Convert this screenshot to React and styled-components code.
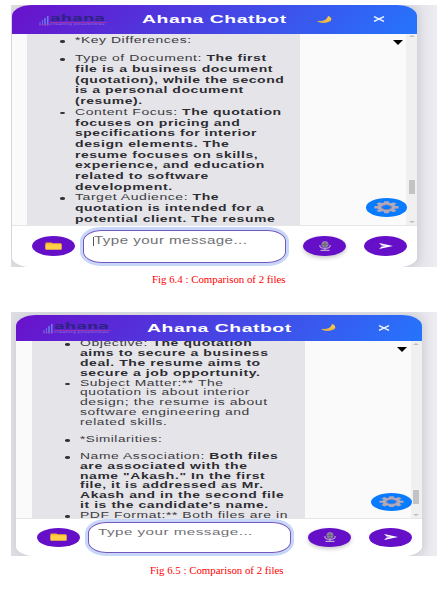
import React, { useLayoutEffect, useRef, useState } from "react";
import styled, { createGlobalStyle } from "styled-components";

const GlobalStyle = createGlobalStyle`
  * { box-sizing: border-box; }
  body { margin: 0; background: #fff; overflow: hidden; }
`;

const Page = styled.main`
  width: 437px;
  height: 593px;
  overflow: hidden;
  display: flex;
  flex-direction: column;
  padding: 5px 0 0 11px;
`;

const Backdrop = styled.section`
  height: ${(p) => p.$height}px;
  flex: none;
  overflow: hidden;
  padding: ${(p) => p.$pad};
  background: linear-gradient(90deg, #dddde3 0, #e2e2e8 405px, #e9e8ee 418px, #eeedf2 426px);
`;

const Card = styled.div`
  width: 405.5px;
  height: 100%;
  display: flex;
  flex-direction: column;
  overflow: hidden;
  background: #fff;
  border-radius: 20px 20px 19px 19px / 11px 11px 10px 10px;
  box-shadow: 2px 0 8px rgba(70, 70, 90, 0.14);
`;

const Header = styled.header`
  flex: none;
  height: ${(p) => p.$height}px;
  display: flex;
  align-items: center;
  padding-left: 27px;
  background: linear-gradient(135deg, #6a11cb 0%, #2575fc 100%);
`;

const Brand = styled.div`
  width: 69px;
  height: 13px;
  display: flex;
  align-items: flex-end;
  margin-right: 34.5px;
`;

const BrandText = styled.div`
  display: flex;
  flex-direction: column;
  width: 57px;
  height: 12px;
`;

const BrandName = styled.div`
  height: 8px;
  display: flex;
  align-items: center;
  color: #2f2384;
  font: bold 9px/8px "DejaVu Sans", sans-serif;
`;

const BrandTag = styled.div`
  height: 4px;
  border-top: 1px solid #9a2fae;
  color: #8f74dc;
  font: 3px/3px "DejaVu Sans", sans-serif;
`;

const Title = styled.div`
  width: 146px;
  color: #fff;
  font: bold 11px/14px "Liberation Sans", sans-serif;
  letter-spacing: 0.3px;
  margin-right: 28.5px;
`;

const HeaderIcon = styled.span`
  display: flex;
  width: ${(p) => p.$width}px;
  margin-right: ${(p) => p.$gap || 0}px;
`;

const Body = styled.div`
  flex: 1;
  min-height: 0;
  display: flex;
  padding-left: 15.5px;
  background: #fafafa;
`;

const Bubble = styled.ul`
  width: 273px;
  margin: 0;
  padding: ${(p) => p.$top}px 0 0 48px;
  overflow: hidden;
  list-style: none;
  background: #e5e4e9;
  color: #3a3a40;
  font: ${(p) => p.$size}px/${(p) => p.$pitch}px "Liberation Sans", sans-serif;
  letter-spacing: 0.35px;
  b { color: #2c2c31; }
`;

const Item = styled.li`
  position: relative;
  margin-bottom: ${(p) => p.$gap || 0}px;
  &::before {
    content: "";
    position: absolute;
    left: -15px;
    top: ${(p) => p.$dot}px;
    width: 5px;
    height: 2.6px;
    border-radius: 50%;
    background: #303035;
  }
`;

const FitBox = styled.div`
  width: ${(p) => p.$width}px;
  white-space: pre;
`;

const FitText = styled.span`
  display: inline-block;
  transform-origin: 0 50%;
  vertical-align: top;
`;

const Side = styled.div`
  flex: 1;
  display: flex;
  flex-direction: column;
  justify-content: space-between;
  align-items: flex-end;
  padding: ${(p) => p.$pad};
`;

const Arrow = styled.i`
  border: solid transparent;
  border-width: ${(p) => (p.$up ? "0 3.5px 2.5px" : "2.5px 3.5px 0")};
  border-${(p) => (p.$up ? "bottom" : "top")}-color: #bcbcbc;
`;

const Chevron = styled.i`
  margin-right: 3.5px;
  border: solid transparent;
  border-width: 5.5px 5.5px 0;
  border-top-color: #000;
`;

const Gear = styled.div`
  width: 41px;
  height: ${(p) => p.$height}px;
  border-radius: 50%;
  background: #087bff;
  display: flex;
  align-items: center;
  justify-content: center;
  margin-right: -1px;
  z-index: 1;
`;

const Scrollbar = styled.div`
  width: 11px;
  display: flex;
  flex-direction: column;
  align-items: center;
  padding: 1.5px 0;
  background: #f0f0f0;
`;

const Thumb = styled.div`
  width: 6px;
  height: 14px;
  margin: auto 0 ${(p) => p.$bottom}px;
  background: #c3c3c3;
`;

const Footer = styled.footer`
  flex: none;
  height: ${(p) => p.$height}px;
  display: flex;
  align-items: center;
  padding: 0 0 0 20.5px;
  border-top: 1px solid #e6e6e9;
  background: #fff;
`;

const RoundButton = styled.div`
  width: 43px;
  height: ${(p) => p.$height}px;
  flex: none;
  display: flex;
  align-items: center;
  justify-content: center;
  margin-right: ${(p) => p.$gap || 0}px;
  border-radius: 50%;
  background: #6510c8;
  box-shadow: ${(p) => (p.$shadow ? "0 2px 4px rgba(0,0,0,0.22)" : "none")};
`;

const Input = styled.div`
  width: 203px;
  height: ${(p) => p.$height}px;
  flex: none;
  display: flex;
  padding: ${(p) => p.$top}px 0 0 9px;
  margin-right: 17px;
  border: 1px solid #7457bd;
  border-radius: 19px / 11px;
  box-shadow: 0 0 0 3px #c6d7f9;
  color: #707074;
  font: ${(p) => p.$size}px/12px "Liberation Sans", sans-serif;
  letter-spacing: 0.3px;
`;

const Caret = styled.i`
  width: 1px;
  height: 9px;
  margin-top: 2px;
  background: #555;
`;

const Caption = styled.p`
  margin: ${(p) => p.$margin};
  color: #ff0000;
  font: 10.7px/13px "Liberation Serif", serif;
`;

/* Stretches a single line horizontally until it fills the given width. */
function Fit({ width, children }) {
  const ref = useRef(null);
  const [scale, setScale] = useState(1);
  useLayoutEffect(() => {
    setScale(width / ref.current.offsetWidth);
  }, [width]);
  return (
    <FitBox $width={width}>
      <FitText ref={ref} style={{ transform: `scaleX(${scale})` }}>
        {children}
      </FitText>
    </FitBox>
  );
}

const MoonIcon = () => (
  <svg width="15" height="7" viewBox="0 0 15 7">
    <path d="M11 0C14.5 1 15.5 4 12.5 5.6C9 7.4 3 7.2 0 4.9C5 5.7 10 4.4 11 0Z" fill="#f6c544" />
    <path d="M1 5.1C5 6.2 10 6 13.5 4" fill="none" stroke="#d99b3c" strokeWidth=".5" />
  </svg>
);

const CloseIcon = () => (
  <svg width="12" height="6" viewBox="0 0 12 6">
    <path d="M1 .6L11 5.4M11 .6L1 5.4" stroke="#e8f0ff" strokeWidth="1.5" />
  </svg>
);

const BarsIcon = () => (
  <svg width="11" height="11" viewBox="0 0 11 11">
    <path d="M1 10.5V7M3.5 10.5V5" stroke="#6a62e8" strokeWidth="1.2" />
    <path d="M6 10.5V3M8.8 10.5V1" stroke="#6e8cec" strokeWidth="1.3" />
    <path d="M0 9.5H11" stroke="#a83bb0" strokeWidth=".6" />
  </svg>
);

const FolderIcon = () => (
  <svg width="17" height="8" viewBox="0 0 17 8">
    <path d="M.5 7V1Q.5.5 1.5.5H6L8 1.3H15.5Q16.5 1.3 16.5 2V7Q16.5 7.5 15.5 7.5H1.5Q.5 7.5.5 7Z" fill="#f5b52e" />
    <path d="M.5 2.2H16.5V7Q16.5 7.5 15.5 7.5H1.5Q.5 7.5.5 7Z" fill="#ffcf45" />
  </svg>
);

const MicIcon = () => (
  <svg width="12" height="10" viewBox="0 0 12 10">
    <path d="M.9 4V5C.9 8.2 11.1 8.2 11.1 5V4M6 7.3V9M1.5 9.3H10.5" fill="none" stroke="#b9a9cf" strokeWidth="1.2" />
    <rect x="2.6" y=".3" width="6.8" height="6.2" rx="3" fill="#a7a0ae" />
    <path d="M3 2H9M2.8 3.6H9.2M3 5.1H9" stroke="#5a4d6b" strokeWidth=".7" />
    <path d="M6 .5V6.3" stroke="#5a4d6b" strokeWidth=".5" />
  </svg>
);

const SendIcon = () => (
  <svg width="14" height="6" viewBox="0 0 14 6">
    <path d="M0 0L14 3L0 6L2.6 3.5L7 3L2.6 2.5Z" fill="#fff" />
  </svg>
);

const GearIcon = ({ height }) => (
  <svg width="25" height={height} viewBox="-12 -12 24 24" preserveAspectRatio="none">
    <path
      d={[0, 45, 90, 135]
        .map((a) => {
          const r = (a * Math.PI) / 180;
          const x = 11.6 * Math.cos(r);
          const y = 11.6 * Math.sin(r);
          return `M${x} ${y}L${x * 0.65} ${y * 0.65}M${-x} ${-y}L${-x * 0.65} ${-y * 0.65}`;
        })
        .join("")}
      stroke="#b3a8b8"
      strokeWidth="4.6"
    />
    <circle r="6.6" fill="#087bff" stroke="#b3a8b8" strokeWidth="4.6" />
    <circle r="4.8" fill="none" stroke="#7580b4" strokeWidth="1" />
  </svg>
);

const first = {
  height: 261.5, pad: "0 0 0 0.5px", header: 28.5, footer: 42,
  size: 8.9, pitch: 10.7, top: 1.8, dot: 4.8, caret: true,
  button: 20, buttonGap: 8, gear: 19, input: 33, inputTop: 4.5, inputSize: 10, placeholder: 154,
  side: "6px 0 7.5px", thumb: 27,
  items: [
    { gap: 7.3, lines: [[116, "*Key Differences:"]] },
    { lines: [
      [191, "Type of Document: ", "The first"],
      [197.5, "", "file is a business document"],
      [209.5, "", "(quotation), while the second"],
      [169, "", "is a personal document"],
      [67.5, "", "(resume)."],
    ] },
    { lines: [
      [206.5, "Content Focus: ", "The quotation"],
      [165.5, "", "focuses on pricing and"],
      [182, "", "specifications for interior"],
      [154, "", "design elements. The"],
      [183.5, "", "resume focuses on skills,"],
      [189.5, "", "experience, and education"],
      [134.5, "", "related to software"],
      [97, "", "development."],
    ] },
    { lines: [
      [143.5, "Target Audience: ", "The"],
      [189.5, "", "quotation is intended for a"],
      [200, "", "potential client. The resume"],
    ] },
  ],
};

const second = {
  height: 244, pad: "2.5px 0 0 5px", header: 26.5, footer: 38.5,
  size: 8.3, pitch: 9.87, top: 0, shift: -1.9, dot: 4.2,
  button: 19, buttonGap: 8.5, gear: 18, input: 31, inputTop: 3.5, inputSize: 9.3, placeholder: 155,
  side: "6px 0 7px", thumb: 10,
  items: [
    { lines: [
      [171.5, "Objective: ", "The quotation"],
      [188.5, "", "aims to secure a business"],
      [181.5, "", "deal. The resume aims to"],
      [180, "", "secure a job opportunity."],
    ] },
    { gap: 7, lines: [
      [143.5, "Subject Matter:** The"],
      [170.5, "quotation is about interior"],
      [187, "design; the resume is about"],
      [170.5, "software engineering and"],
      [87, "related skills."],
    ] },
    { gap: 7, lines: [[83, "*Similarities:"]] },
    { lines: [
      [199, "Name Association: ", "Both files"],
      [167, "", "are associated with the"],
      [186, "", 'name "Akash." In the first'],
      [183, "", "file, it is addressed as Mr."],
      [204.5, "", "Akash and in the second file"],
      [188, "", "it is the candidate's name."],
    ] },
    { lines: [[207.5, "PDF Format:** Both files are in"]] },
  ],
};

const Messages = styled.div`
  margin-top: ${(p) => p.$shift || 0}px;
`;

function Chat({ d }) {
  return (
    <Backdrop $height={d.height} $pad={d.pad}>
      <Card>
        <Header $height={d.header}>
          <Brand>
            <BarsIcon />
            <BrandText>
              <BrandName><Fit width={55}>ahana</Fit></BrandName>
              <BrandTag><Fit width={55}>creating possibilities</Fit></BrandTag>
            </BrandText>
          </Brand>
          <Title><Fit width={144.5}>Ahana Chatbot</Fit></Title>
          <HeaderIcon $width={15} $gap={41.5}><MoonIcon /></HeaderIcon>
          <HeaderIcon $width={12}><CloseIcon /></HeaderIcon>
        </Header>
        <Body>
          <Bubble $size={d.size} $pitch={d.pitch} $top={d.top}>
            <Messages $shift={d.shift}>
              {d.items.map((item, i) => (
                <Item key={i} $gap={item.gap} $dot={d.dot}>
                  {item.lines.map(([w, plain, bold]) => (
                    <Fit key={plain + bold} width={w}>
                      {plain}
                      {bold && <b>{bold}</b>}
                    </Fit>
                  ))}
                </Item>
              ))}
            </Messages>
          </Bubble>
          <Side $pad={d.side}>
            <Chevron />
            <Gear $height={d.gear}><GearIcon height={d.gear - 6.5} /></Gear>
          </Side>
          <Scrollbar>
            <Arrow $up />
            <Thumb $bottom={d.thumb} />
            <Arrow />
          </Scrollbar>
        </Body>
        <Footer $height={d.footer}>
          <RoundButton $height={d.button} $gap={d.buttonGap}><FolderIcon /></RoundButton>
          <Input $height={d.input} $top={d.inputTop} $size={d.inputSize}>
            {d.caret && <Caret />}
            <Fit width={d.placeholder}>Type your message...</Fit>
          </Input>
          <RoundButton $height={d.button} $gap={18} $shadow><MicIcon /></RoundButton>
          <RoundButton $height={d.button}><SendIcon /></RoundButton>
        </Footer>
      </Card>
    </Backdrop>
  );
}

export default function App() {
  return (
    <Page>
      <GlobalStyle />
      <Chat d={first} />
      <Caption $margin="6.5px 0 26px 140.5px"><Fit width={134}>Fig 6.4 : Comparison of 2 files</Fit></Caption>
      <Chat d={second} />
      <Caption $margin="8px 0 0 138.5px"><Fit width={134}>Fig 6.5 : Comparison of 2 files</Fit></Caption>
    </Page>
  );
}
